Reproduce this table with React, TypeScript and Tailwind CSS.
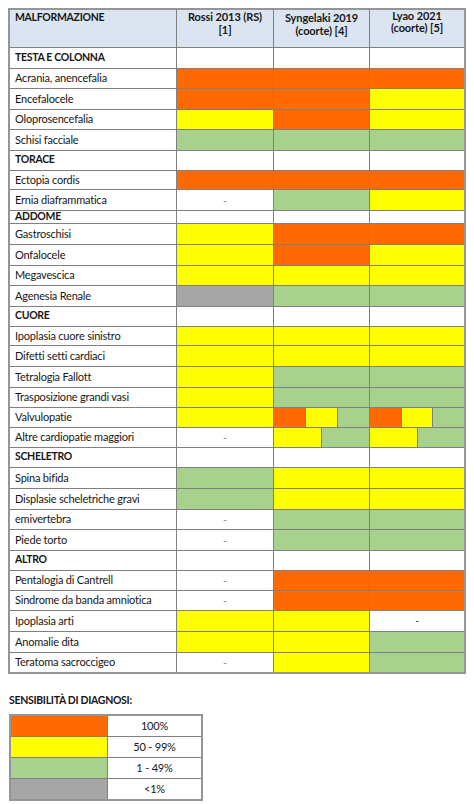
import React from 'react';

type C = string;

const bg: Record<string, string> = {
  O: 'bg-[#ff6a00]',
  Y: 'bg-[#ffff00]',
  G: 'bg-[#a9d18e]',
  X: 'bg-[#a6a6a6]',
  W: 'bg-white',
  '-': 'bg-white',
  d: 'bg-white',
};

type Row = { label: string; h: number; section?: boolean; cells?: C[] };

// h = altezza della riga senza la linea di separazione
const rows: Row[] = [
  { label: 'TESTA E COLONNA', h: 20, section: true },
  { label: 'Acrania, anencefalia', h: 19, cells: ['O', 'O', 'O'] },
  { label: 'Encefalocele', h: 20, cells: ['O', 'O', 'Y'] },
  { label: 'Oloprosencefalia', h: 19, cells: ['Y', 'O', 'Y'] },
  { label: 'Schisi facciale', h: 20, cells: ['G', 'G', 'G'] },
  { label: 'TORACE', h: 19, section: true },
  { label: 'Ectopia cordis', h: 18, cells: ['O', 'O', 'O'] },
  { label: 'Ernia diaframmatica', h: 20, cells: ['-', 'G', 'Y'] },
  { label: 'ADDOME', h: 12, section: true },
  { label: 'Gastroschisi', h: 20, cells: ['Y', 'O', 'O'] },
  { label: 'Onfalocele', h: 20, cells: ['Y', 'O', 'Y'] },
  { label: 'Megavescica', h: 19, cells: ['Y', 'Y', 'Y'] },
  { label: 'Agenesia Renale', h: 20, cells: ['X', 'G', 'G'] },
  { label: 'CUORE', h: 19, section: true },
  { label: 'Ipoplasia cuore sinistro', h: 18, cells: ['Y', 'Y', 'Y'] },
  { label: 'Difetti setti cardiaci', h: 20, cells: ['Y', 'Y', 'Y'] },
  { label: 'Tetralogia Fallott', h: 20, cells: ['Y', 'G', 'G'] },
  { label: 'Trasposizione grandi vasi', h: 19, cells: ['Y', 'G', 'G'] },
  { label: 'Valvulopatie', h: 19, cells: ['Y', 'OYG', 'OYG'] },
  { label: 'Altre cardiopatie maggiori', h: 19, cells: ['-', 'YG', 'YG'] },
  { label: 'SCHELETRO', h: 19, section: true },
  { label: 'Spina bifida', h: 20, cells: ['G', 'Y', 'Y'] },
  { label: 'Displasie scheletriche gravi', h: 20, cells: ['G', 'Y', 'Y'] },
  { label: 'emivertebra', h: 19, cells: ['-', 'G', 'G'] },
  { label: 'Piede torto', h: 20, cells: ['-', 'G', 'G'] },
  { label: 'ALTRO', h: 19, section: true },
  { label: 'Pentalogia di Cantrell', h: 19, cells: ['-', 'O', 'O'] },
  { label: 'Sindrome da banda amniotica', h: 19, cells: ['-', 'O', 'O'] },
  { label: 'Ipoplasia arti', h: 20, cells: ['Y', 'Y', 'd'] },
  { label: 'Anomalie dita', h: 20, cells: ['Y', 'Y', 'G'] },
  { label: 'Teratoma sacroccigeo', h: 19, cells: ['-', 'Y', 'G'] },
];

const colW = ['w-[96px]', 'w-[95px]', 'w-[94px]'];

function Cell({ c, w }: { c: C; w: string }) {
  if (c.length > 1) {
    return (
      <div className={`${w} flex gap-px bg-[#808080]`}>
        {c.split('').map((s, i) => (
          <div key={i} className={`flex-1 ${bg[s]}`} />
        ))}
      </div>
    );
  }
  return (
    <div className={`${w} flex items-center justify-center ${bg[c]}`}>
      {c === '-' && <span className="text-[11px] leading-none text-[#888]">-</span>}
      {c === 'd' && <span className="text-[10px] leading-none text-black -mt-[3px]">-</span>}
    </div>
  );
}

const legend = [
  ['bg-[#ff6a00]', '100%'],
  ['bg-[#ffff00]', '50 - 99%'],
  ['bg-[#a9d18e]', '1 - 49%'],
  ['bg-[#a6a6a6]', '<1%'],
];

export default function App() {
  return (
    <div className="w-[474px] h-[804px] bg-white text-[#161616] font-['Lato',sans-serif] text-[11px] tracking-[-0.2px] pt-[8px] pl-[8px]">
      <div className="w-[458px] border-2 border-[#959595] bg-[#808080] flex flex-col gap-px">
        {/* intestazione */}
        <div className="flex gap-px h-[37px] font-bold">
          <div className="w-[166px] bg-[#dbe5f1] pl-[5px] text-[10.5px] tracking-[-0.3px] leading-[13px] pt-[1px]">
            MALFORMAZIONE
          </div>
          <div className="w-[96px] bg-[#dbe5f1] text-center leading-[13px] tracking-[-0.1px]">
            Rossi 2013 (RS)
            <br />
            [1]
          </div>
          <div className="w-[95px] bg-[#dbe5f1] text-center leading-[13px] pt-[1px] tracking-[-0.1px]">
            Syngelaki 2019
            <br />
            (coorte) [4]
          </div>
          <div className="w-[94px] bg-[#dbe5f1] text-center leading-[12px] tracking-[-0.1px]">
            Lyao 2021
            <br />
            (coorte) [5]
          </div>
        </div>

        {rows.map((r) => (
          <div key={r.label} style={{ height: r.h }} className="flex gap-px">
            <div
              className={`w-[166px] bg-white pl-[5px] flex items-center leading-none ${
                r.section ? 'font-bold text-[10.5px] tracking-[-0.3px]' : ''
              }`}
            >
              <span className="-mt-[2px]">{r.label}</span>
            </div>
            {(r.cells ?? ['W', 'W', 'W']).map((c, j) => (
              <Cell key={j} c={c} w={colW[j]} />
            ))}
          </div>
        ))}
      </div>

      <div className="mt-[19px] pl-[1px] font-bold text-[10.5px] tracking-[-0.3px] leading-[14px]">
        SENSIBILITÀ DI DIAGNOSI:
      </div>

      <div className="mt-[7px] ml-[1px] w-[194px] border-2 border-[#959595] bg-[#808080] flex flex-col gap-px">
        {legend.map(([c, t]) => (
          <div key={t} className="flex gap-px h-[20px]">
            <div className={`w-[96px] ${c}`} />
            <div className="flex-1 bg-white flex items-center justify-center">{t}</div>
          </div>
        ))}
      </div>
    </div>
  );
}
